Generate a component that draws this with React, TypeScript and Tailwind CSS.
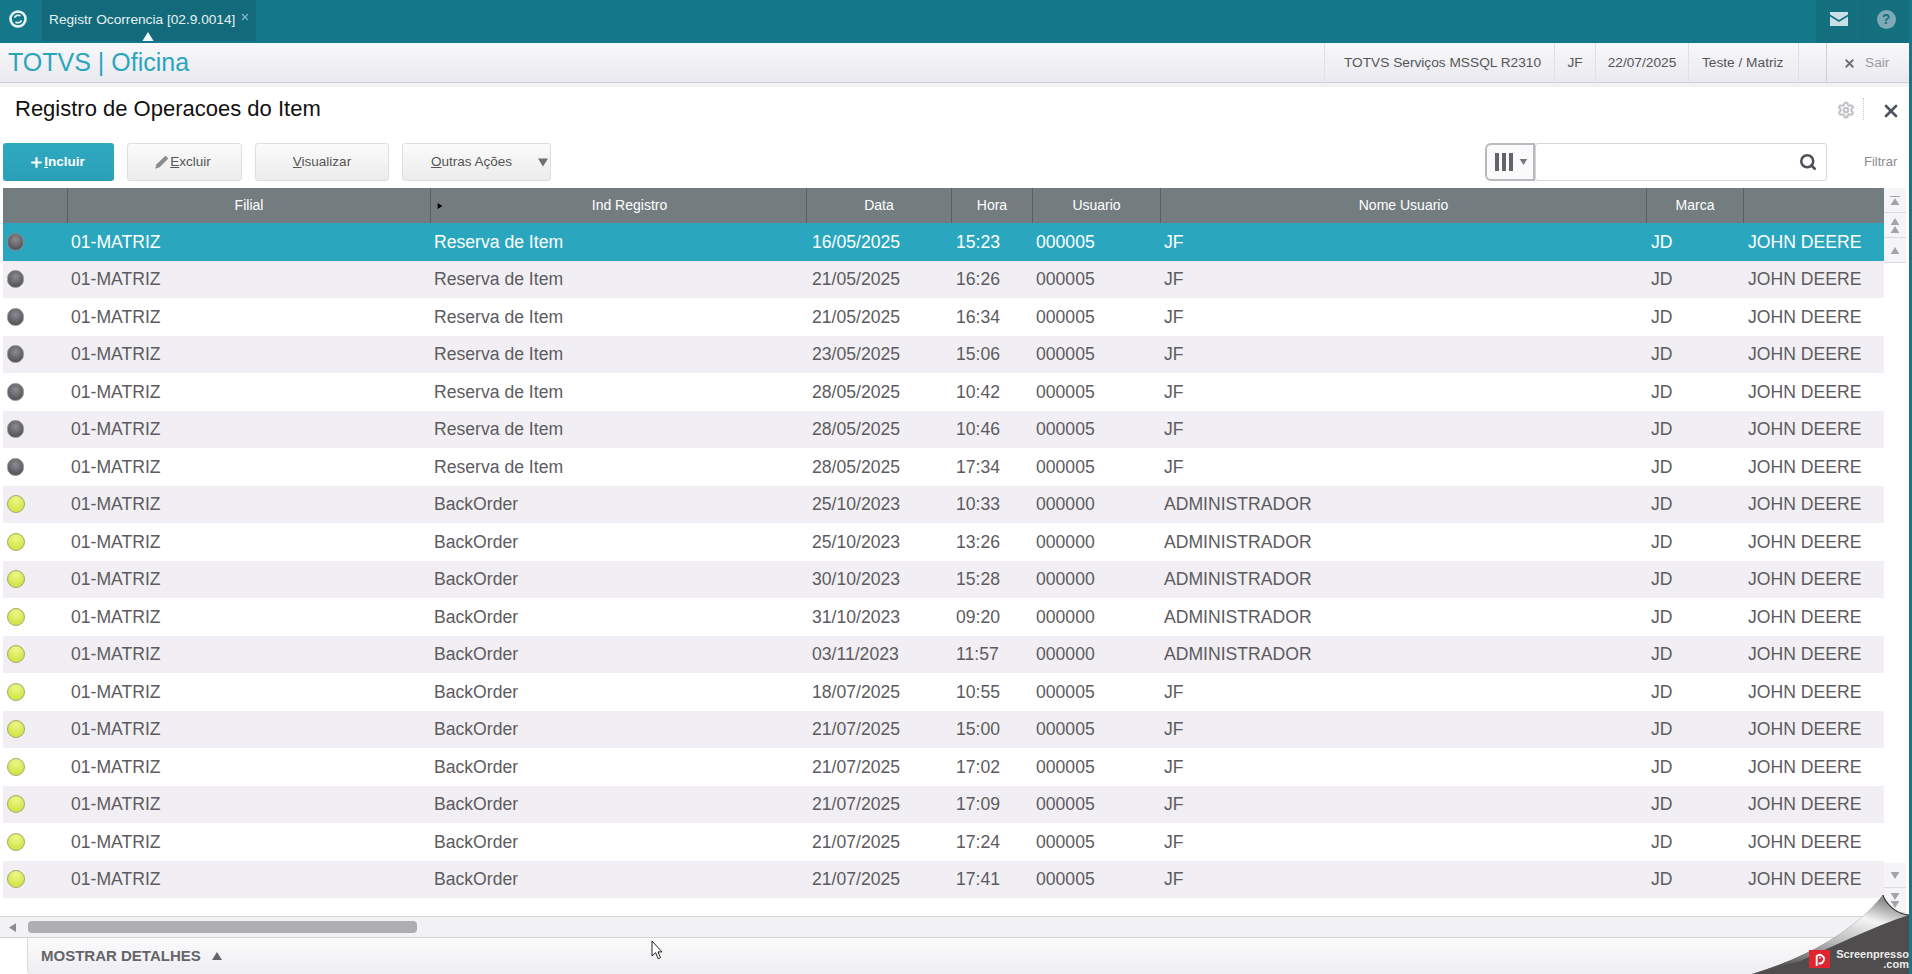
import React from "react";
import { X, Settings, Search, Plus } from "lucide-react";

const font = "font-['Liberation_Sans',Arial,sans-serif]";
const cols = "grid grid-cols-[65px_363px_376px_145px_81px_128px_486px_97px_140px]";

type R = [string, string, string, string, string, string];
const rows: R[] = [
  ["Reserva de Item", "16/05/2025", "15:23", "000005", "JF", "g"],
  ["Reserva de Item", "21/05/2025", "16:26", "000005", "JF", "g"],
  ["Reserva de Item", "21/05/2025", "16:34", "000005", "JF", "g"],
  ["Reserva de Item", "23/05/2025", "15:06", "000005", "JF", "g"],
  ["Reserva de Item", "28/05/2025", "10:42", "000005", "JF", "g"],
  ["Reserva de Item", "28/05/2025", "10:46", "000005", "JF", "g"],
  ["Reserva de Item", "28/05/2025", "17:34", "000005", "JF", "g"],
  ["BackOrder", "25/10/2023", "10:33", "000000", "ADMINISTRADOR", "y"],
  ["BackOrder", "25/10/2023", "13:26", "000000", "ADMINISTRADOR", "y"],
  ["BackOrder", "30/10/2023", "15:28", "000000", "ADMINISTRADOR", "y"],
  ["BackOrder", "31/10/2023", "09:20", "000000", "ADMINISTRADOR", "y"],
  ["BackOrder", "03/11/2023", "11:57", "000000", "ADMINISTRADOR", "y"],
  ["BackOrder", "18/07/2025", "10:55", "000005", "JF", "y"],
  ["BackOrder", "21/07/2025", "15:00", "000005", "JF", "y"],
  ["BackOrder", "21/07/2025", "17:02", "000005", "JF", "y"],
  ["BackOrder", "21/07/2025", "17:09", "000005", "JF", "y"],
  ["BackOrder", "21/07/2025", "17:24", "000005", "JF", "y"],
  ["BackOrder", "21/07/2025", "17:41", "000005", "JF", "y"],
];

function Tri({ dir = "up", cls = "" }: { dir?: "up" | "down"; cls?: string }) {
  return (
    <svg viewBox="0 0 10 8" className={cls} fill="currentColor">
      {dir === "up" ? <path d="M5 0 10 8H0z" /> : <path d="M0 0h10L5 8z" />}
    </svg>
  );
}

function Bullet({ kind }: { kind: string }) {
  return kind === "g" ? (
    <div className="w-[17px] h-[18px] rounded-full border border-[#8a8a8a] bg-[radial-gradient(circle_at_50%_35%,#8b8b90,#55555a_75%)]" />
  ) : (
    <div className="w-[18px] h-[18px] rounded-full border border-[#a3a86a] bg-[radial-gradient(circle_at_50%_25%,#eef78a,#d3e64a_70%)]" />
  );
}

function ScrollBtn({ children }: { children: React.ReactNode }) {
  return (
    <div className="h-[25px] w-[22px] flex flex-col items-center justify-center border-b border-[#dcdcdf] bg-[#f5f5f7] text-[#a3a3a8]">
      {children}
    </div>
  );
}

function Btn({ w, children }: { w: string; children: React.ReactNode }) {
  return (
    <div className={`${w} h-[38px] flex items-center justify-center rounded-[3px] border border-[#dedede] bg-gradient-to-b from-[#fbfbfb] to-[#ececec] text-[13.5px] text-[#555]`}>
      {children}
    </div>
  );
}

function Head({ label, cls = "" }: { label: string; cls?: string }) {
  return (
    <div className={`flex items-center justify-center border-r border-[#566164] text-[14px] text-white ${cls}`}>
      {label}
    </div>
  );
}

export default function App() {
  return (
    <div className={`${font} relative w-[1912px] h-[974px] overflow-hidden flex flex-col bg-white border-r-[3px] border-[#15788a]`}>
      {/* top bar */}
      <div className="h-[43px] shrink-0 flex bg-[#15788a] text-white">
        <div className="w-[36px] h-full flex items-center justify-center">
          <svg viewBox="0 0 20 20" className="w-[20px] h-[20px] -mt-[6px]" fill="none" stroke="#e8f4f6">
            <circle cx="10" cy="10" r="7.5" strokeWidth="2.6" />
            <path d="M6.5 8.7a4 4 0 0 1 6-1.7M13.5 11.3a4 4 0 0 1-6 1.7" strokeWidth="1.7" />
          </svg>
        </div>
        <div className="relative ml-[6px] w-[214px] h-[41px] bg-[#136a7b] flex items-start pt-[10px] pl-[7px] text-[13.7px] text-[#e6f2f4]">
          <span>Registr Ocorrencia [02.9.0014]</span>
          <X size={10} className="ml-[5px] mt-[2px] text-[#7fb6c2]" strokeWidth={3} />
          <Tri cls="absolute left-[97px] bottom-0 w-[18px] h-[9px] text-[#f4f7f8]" />
        </div>
        <div className="flex-1" />
        <div className="w-[47px] flex items-center justify-center bg-[#14707f] border-r border-[#126876]">
          <svg viewBox="0 0 18 14" className="w-[18px] h-[14px] -mt-[5px]">
            <path d="M0 0h18v2.5L9 8 0 2.5z" fill="#c8e0e6" />
            <path d="M0 4.5 9 10l9-5.5V14H0z" fill="#c8e0e6" />
          </svg>
        </div>
        <div className="w-[46px] flex items-center justify-center bg-[#14707f]">
          <div className="w-[19px] h-[19px] -mt-[5px] rounded-full bg-[#7fa9b4] flex items-center justify-center text-[14px] font-bold text-[#14707f]">?</div>
        </div>
      </div>

      {/* header strip */}
      <div className="h-[40px] shrink-0 flex items-center bg-gradient-to-b from-[#f9f9fb] to-[#e9e9ef] border-b border-[#cfcfd4] text-[13.7px] text-[#555]">
        <span className="ml-[8px] text-[25px] text-[#2ba5bd]">TOTVS | Oficina</span>
        <div className="flex-1" />
        <div className="w-[230px] h-full flex items-center pl-[19px] pt-[2px] border-l border-[#e0e0e6]">TOTVS Serviços MSSQL R2310</div>
        <div className="w-[41px] h-full flex items-center justify-center pt-[2px] border-l border-[#e0e0e6]">JF</div>
        <div className="w-[93px] h-full flex items-center justify-center pt-[2px] border-l border-[#e0e0e6]">22/07/2025</div>
        <div className="w-[110px] h-full flex items-center pl-[13px] pt-[2px] border-l border-[#e0e0e6]">Teste / Matriz</div>
        <div className="w-[28px] h-full border-l border-[#e0e0e6]" />
        <div className="w-[83px] h-full flex items-center pl-[16px] pt-[2px] gap-[9px] border-l border-[#cfcfd4] text-[#9a9aa0]">
          <X size={13} strokeWidth={3.5} className="text-[#6f6f75]" />
          <span>Sair</span>
        </div>
      </div>
      <div className="h-[4px] shrink-0 bg-[#f2f2f5]" />

      {/* title */}
      <div className="h-[38px] shrink-0 flex items-center pl-[15px] pt-[4px]">
        <span className="text-[22px] text-[#111]">Registro de Operacoes do Item</span>
        <div className="flex-1" />
        <Settings size={18} className="text-[#c4c4c8] mr-[8px] mt-[4px]" strokeWidth={3} />
        <div className="h-[22px] border-l border-dotted border-[#c8c8c8] mr-[17px] mt-[2px]" />
        <X size={20} strokeWidth={3.2} className="text-[#4d5660] mr-[8px] mt-[5px]" />
      </div>

      {/* toolbar */}
      <div className="h-[38px] mt-[18px] shrink-0 flex items-center pl-[3px]">
        <div className="w-[111px] h-[38px] flex items-center justify-center rounded-[3px] bg-gradient-to-b from-[#2fa9c0] to-[#2aa0b8] text-white text-[13.5px] font-bold">
          <Plus size={15} strokeWidth={3.5} className="-ml-[3px]" />
          <span><u>I</u>ncluir</span>
        </div>
        <div className="w-[13px]" />
        <Btn w="w-[115px]">
          <svg viewBox="0 0 14 14" className="w-[16px] h-[16px] -ml-[4px]"><path d="M1 13l1.2-4L10 1.5 12.5 4 5 11.6z" fill="#8d8d8d" /></svg>
          <span><u>E</u>xcluir</span>
        </Btn>
        <div className="w-[13px]" />
        <Btn w="w-[134px]"><span><u>V</u>isualizar</span></Btn>
        <div className="w-[13px]" />
        <div className="w-[149px] h-[38px] flex items-center pl-[28px] rounded-[3px] border border-[#dedede] bg-gradient-to-b from-[#fbfbfb] to-[#ececec] text-[13.5px] text-[#555]">
          <span><u>O</u>utras Ações</span>
          <Tri dir="down" cls="w-[10px] h-[9px] ml-[26px] text-[#6f6f75]" />
        </div>
        <div className="flex-1" />
        <div className="w-[50px] h-[38px] flex items-center pl-[8px] gap-[6px] rounded-l-[6px] border-2 border-[#b9b9c0] bg-[#fafafa]">
          <div className="flex gap-[3px]">
            <div className="w-[4px] h-[18px] bg-[#63636a]" />
            <div className="w-[4px] h-[18px] bg-[#63636a]" />
            <div className="w-[4px] h-[18px] bg-[#63636a]" />
          </div>
          <Tri dir="down" cls="w-[9px] h-[6px] text-[#77777d]" />
        </div>
        <div className="w-[292px] h-[38px] flex items-center justify-end pr-[9px] rounded-[3px] border border-[#d6d6da] bg-white">
          <Search size={18} strokeWidth={3.4} className="text-[#4d5158]" />
        </div>
        <div className="w-[82px] pl-[37px] text-[13px] text-[#8b8b90]">Filtrar</div>
      </div>

      {/* table + vertical scroll */}
      <div className="mt-[7px] ml-[3px] flex flex-1 min-h-0">
        <div className="w-[1881px] shrink-0">
          <div className={`${cols} h-[35px] bg-[#737d80]`}>
            <Head label="" />
            <Head label="Filial" />
            <div className="relative flex items-center justify-center pl-[22px] border-r border-[#566164] text-[14px] text-white">
              <Tri cls="absolute left-[6px] top-[15px] w-[6px] h-[6px] rotate-90 text-black" />
              Ind Registro
            </div>
            <Head label="Data" />
            <Head label="Hora" />
            <Head label="Usuario" />
            <Head label="Nome Usuario" />
            <Head label="Marca" />
            <div />
          </div>
          {rows.map((r, i) => (
            <div
              key={i}
              className={`${cols} h-[37.5px] items-center text-[17.6px] ${i === 0 ? "bg-[#2aa7bf] text-white" : i % 2 === 1 ? "bg-[#f1eff3] text-[#5d5b60]" : "bg-white text-[#5d5b60]"}`}
            >
              <div className="pl-[4px]"><Bullet kind={r[5]} /></div>
              <div className="pl-[3px]">01-MATRIZ</div>
              <div className="pl-[3px]">{r[0]}</div>
              <div className="pl-[5px]">{r[1]}</div>
              <div className="pl-[4px]">{r[2]}</div>
              <div className="pl-[3px]">{r[3]}</div>
              <div className="pl-[3px]">{r[4]}</div>
              <div className="pl-[4px]">JD</div>
              <div className="pl-[4px] whitespace-nowrap">JOHN DEERE</div>
            </div>
          ))}
        </div>
        <div className="w-[22px] h-[725px] flex flex-col justify-between">
          <div>
            <ScrollBtn>
              <div className="w-[10px] h-[1px] bg-[#a3a3a8] mb-[1px]" />
              <Tri cls="w-[10px] h-[7px]" />
            </ScrollBtn>
            <ScrollBtn>
              <Tri cls="w-[10px] h-[7px] mb-[1px]" />
              <Tri cls="w-[10px] h-[7px]" />
            </ScrollBtn>
            <ScrollBtn><Tri cls="w-[10px] h-[7px]" /></ScrollBtn>
          </div>
          <div>
            <ScrollBtn><Tri dir="down" cls="w-[10px] h-[7px]" /></ScrollBtn>
            <ScrollBtn>
              <Tri dir="down" cls="w-[10px] h-[7px] mb-[1px]" />
              <Tri dir="down" cls="w-[10px] h-[7px]" />
            </ScrollBtn>
          </div>
        </div>
      </div>

      {/* horizontal scroll */}
      <div className="h-[22px] shrink-0 flex items-center border-y border-[#d2d2d6] bg-[#f2f1f4]">
        <Tri cls="w-[9px] h-[7px] -rotate-90 text-[#8a8a90] ml-[8px]" />
        <div className="ml-[11px] w-[389px] h-[12px] rounded-[4px] bg-[#aeaeb2]" />
      </div>

      {/* details */}
      <div className="h-[36px] shrink-0 ml-[27px] flex items-center pl-[13px] rounded-bl-[3px] border-l border-[#dcdcdf] bg-gradient-to-b from-[#fbfbfc] to-[#eeeef1] text-[15px] font-bold text-[#64646a]">
        MOSTRAR DETALHES
        <Tri cls="w-[10px] h-[8px] ml-[11px]" />
      </div>

      {/* mouse cursor */}
      <svg viewBox="0 0 12 20" className="absolute left-[651px] top-[940px] w-[12px] h-[20px]">
        <path d="M1 1v15l3.6-3.3 2.5 6 2.4-1-2.5-5.8H11z" fill="#fff" stroke="#222" strokeWidth="1" />
      </svg>

      {/* page curl */}
      <svg viewBox="0 0 170 85" className="absolute right-[-3px] bottom-0 w-[170px] h-[85px]">
        <defs>
          <linearGradient id="curl" x1="0.8" y1="0.05" x2="0.3" y2="0.95">
            <stop offset="0" stopColor="#8c8c8c" />
            <stop offset="0.25" stopColor="#f4f4f4" />
            <stop offset="0.6" stopColor="#b8b8b8" />
            <stop offset="1" stopColor="#555" />
          </linearGradient>
        </defs>
        <path d="M10 85C60 70 110 45 141 6c4 8 12 18 26 20l3-1v60z" fill="#4f4d4e" />
        <path d="M10 85C60 70 110 45 141 6c2 8 12 19 26 20C130 38 90 58 58 72z" fill="url(#curl)" />
        <path d="M141 6c2 8 12 19 26 20" fill="none" stroke="#333" strokeWidth="1" />
      </svg>
      <div className="absolute left-[1809px] top-[950px] w-[21px] h-[18px] bg-[#e0252f] flex items-center justify-center">
        <svg viewBox="0 0 16 16" className="w-[15px] h-[15px]" fill="none" stroke="#fff" strokeWidth="2">
          <path d="M5 15V4.5a4.5 4.5 0 1 1 2 7.5" />
          <circle cx="8.5" cy="6" r="1" fill="#fff" stroke="none" />
        </svg>
      </div>
      <div className="absolute right-[0px] top-[949px] text-right text-[11px] leading-[10px] font-bold text-[#ececec]">
        <div>Screenpresso</div>
        <div>.com</div>
      </div>
    </div>
  );
}
